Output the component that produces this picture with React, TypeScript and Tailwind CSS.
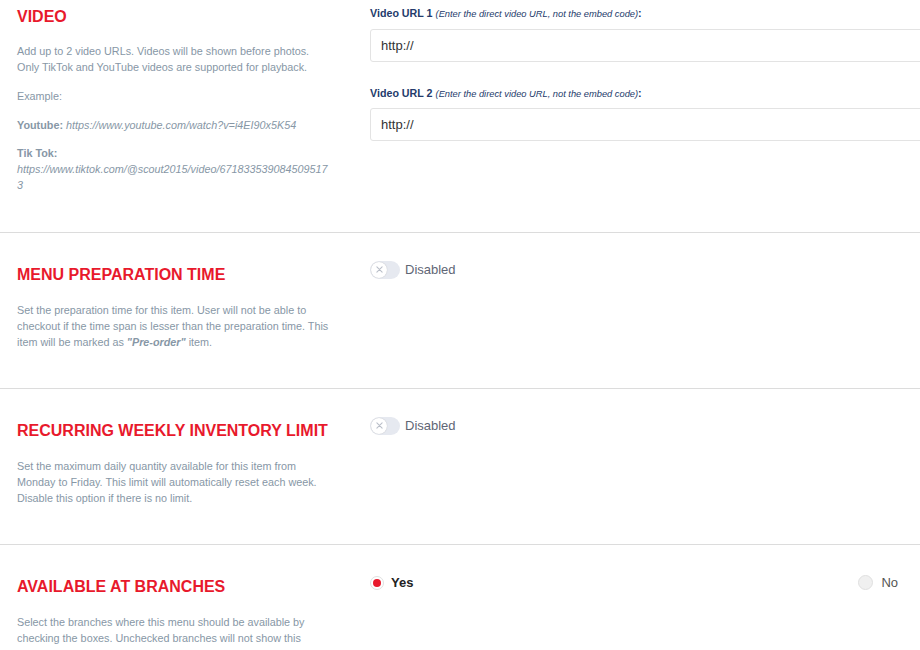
import React from "react";

const font = { fontFamily: '"Liberation Sans", Arial, sans-serif' };

function Title({ children }: { children: React.ReactNode }) {
  return (
    <h2 className="text-[16px] leading-[20px] font-bold text-[#e8192c] whitespace-nowrap">{children}</h2>
  );
}

function Toggle() {
  return (
    <div className="flex items-center gap-[5px]">
      <div className="relative w-[30px] h-[18px] rounded-full bg-[#e6e9f0]">
        <div className="absolute left-[1px] top-[1px] w-[16px] h-[16px] rounded-full bg-white shadow-[0_0_1px_rgba(0,0,0,0.25)] flex items-center justify-center">
          <svg width="7" height="7" viewBox="0 0 8 8">
            <path d="M1 1L7 7M7 1L1 7" stroke="#b9bec8" strokeWidth="1.2" strokeLinecap="round" />
          </svg>
        </div>
      </div>
      <span className="text-[13px] text-[#5f6675]">Disabled</span>
    </div>
  );
}

const desc = "text-[10.8px] leading-[16px] text-[#8797a6]";

export default function App() {
  return (
    <div style={font} className="w-[920px] h-[650px] overflow-hidden bg-white">
      {/* VIDEO */}
      <section className="flex pl-[17px] h-[233px] border-b border-[#dcdcdc]">
        <div className="w-[316px] shrink-0 pt-[7px]">
          <Title>VIDEO</Title>
          <p className={`mt-[16px] ${desc}`}>
            Add up to 2 video URLs. Videos will be shown before photos. Only TikTok and YouTube videos are supported for playback.
          </p>
          <p className={`mt-[13px] ${desc}`}>Example:</p>
          <p className={`mt-[13px] ${desc}`}>
            <span className="font-bold">Youtube:</span> <i>https://www.youtube.com/watch?v=i4EI90x5K54</i>
          </p>
          <p className={`mt-[12px] ${desc} break-all`}>
            <span className="font-bold">Tik Tok:</span>
            <br />
            <i>https://www.tiktok.com/@scout2015/video/6718335390845095173</i>
          </p>
        </div>
        <div className="ml-[37px] w-[570px] shrink-0 pt-[6px]">
          <label className="block text-[10.7px] leading-[14px] text-[#243b6b] font-bold">
            Video URL 1 <i className="font-normal text-[9.3px]">(Enter the direct video URL, not the embed code)</i>:
          </label>
          <div className="mt-[8px] h-[33px] border border-[#e3e3e3] rounded-[3px] flex items-center px-[10px] text-[13px] text-[#333]">
            http://
          </div>
          <label className="block mt-[24px] text-[10.7px] leading-[14px] text-[#243b6b] font-bold">
            Video URL 2 <i className="font-normal text-[9.3px]">(Enter the direct video URL, not the embed code)</i>:
          </label>
          <div className="mt-[7px] h-[33px] border border-[#e3e3e3] rounded-[3px] flex items-center px-[10px] text-[13px] text-[#333]">
            http://
          </div>
        </div>
      </section>

      {/* MENU PREPARATION TIME */}
      <section className="flex pl-[17px] h-[156px] border-b border-[#dcdcdc]">
        <div className="w-[316px] shrink-0 pt-[32px]">
          <Title>MENU PREPARATION TIME</Title>
          <p className={`mt-[17px] ${desc}`}>
            Set the preparation time for this item. User will not be able to checkout if the time span is lesser than the preparation time. This item will be marked as <b><i>"Pre-order"</i></b> item.
          </p>
        </div>
        <div className="ml-[37px] pt-[27px]">
          <Toggle />
        </div>
      </section>

      {/* RECURRING WEEKLY INVENTORY LIMIT */}
      <section className="flex pl-[17px] h-[156px] border-b border-[#dcdcdc]">
        <div className="w-[316px] shrink-0 pt-[32px]">
          <Title>RECURRING WEEKLY INVENTORY LIMIT</Title>
          <p className={`mt-[17px] ${desc}`}>
            Set the maximum daily quantity available for this item from Monday to Friday. This limit will automatically reset each week. Disable this option if there is no limit.
          </p>
        </div>
        <div className="ml-[37px] pt-[27px]">
          <Toggle />
        </div>
      </section>

      {/* AVAILABLE AT BRANCHES */}
      <section className="flex pl-[17px]">
        <div className="w-[316px] shrink-0 pt-[32px]">
          <Title>AVAILABLE AT BRANCHES</Title>
          <p className={`mt-[17px] ${desc}`}>
            Select the branches where this menu should be available by checking the boxes. Unchecked branches will not show this menu.
          </p>
        </div>
        <div className="ml-[37px] w-[528px] shrink-0 pt-[31px] flex justify-between items-start">
          <div className="flex items-center gap-[7px]">
            <div className="w-[14px] h-[14px] rounded-full border border-[#e0e0e0] bg-white flex items-center justify-center">
              <div className="w-[8px] h-[8px] rounded-full bg-[#e8192c]" />
            </div>
            <span className="text-[13px] leading-[14px] font-bold text-[#222]">Yes</span>
          </div>
          <div className="flex items-center gap-[8px] -mt-[1px]">
            <div className="w-[15px] h-[15px] rounded-full border border-[#e0e0e0] bg-[#f0f0f0]" />
            <span className="text-[13px] leading-[15px] text-[#555]">No</span>
          </div>
        </div>
      </section>
    </div>
  );
}
